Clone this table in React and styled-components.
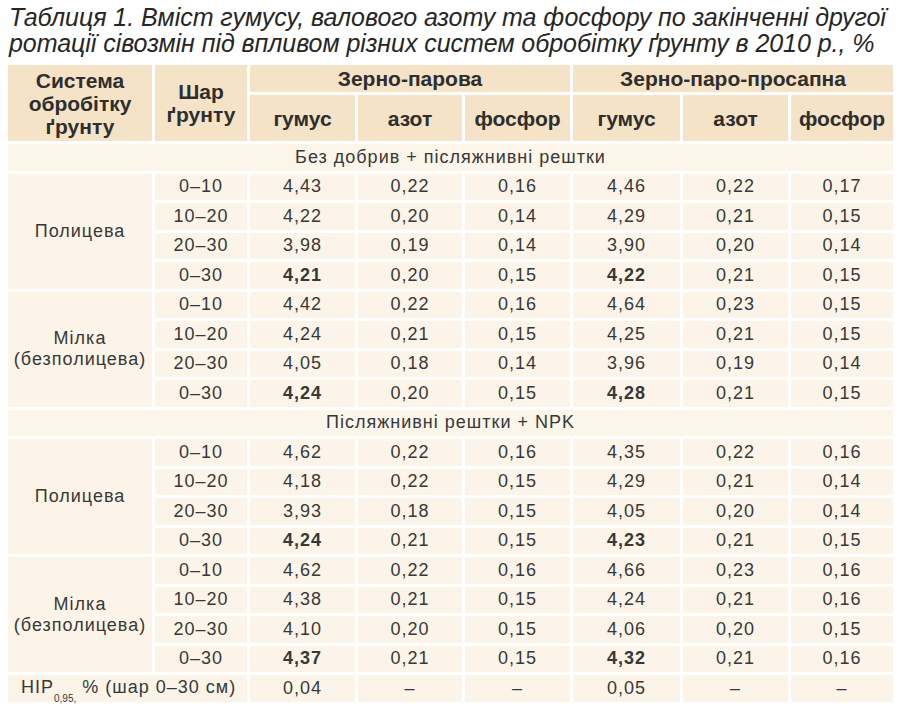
import React from 'react'
import styled, { createGlobalStyle } from 'styled-components'

const GlobalStyle = createGlobalStyle`
  body {
    margin: 0;
    background: #ffffff;
    font-family: "Liberation Sans", Arial, sans-serif;
  }
`

const sections = [
  {
    title: 'Без добрив + післяжнивні рештки',
    groups: [
      {
        name: ['Полицева'],
        rows: [
          ['0–10', '4,43', '0,22', '0,16', '4,46', '0,22', '0,17'],
          ['10–20', '4,22', '0,20', '0,14', '4,29', '0,21', '0,15'],
          ['20–30', '3,98', '0,19', '0,14', '3,90', '0,20', '0,14'],
          ['0–30', '4,21', '0,20', '0,15', '4,22', '0,21', '0,15'],
        ],
      },
      {
        name: ['Мілка', '(безполицева)'],
        rows: [
          ['0–10', '4,42', '0,22', '0,16', '4,64', '0,23', '0,15'],
          ['10–20', '4,24', '0,21', '0,15', '4,25', '0,21', '0,15'],
          ['20–30', '4,05', '0,18', '0,14', '3,96', '0,19', '0,14'],
          ['0–30', '4,24', '0,20', '0,15', '4,28', '0,21', '0,15'],
        ],
      },
    ],
  },
  {
    title: 'Післяжнивні рештки + NPK',
    groups: [
      {
        name: ['Полицева'],
        rows: [
          ['0–10', '4,62', '0,22', '0,16', '4,35', '0,22', '0,16'],
          ['10–20', '4,18', '0,22', '0,15', '4,29', '0,21', '0,14'],
          ['20–30', '3,93', '0,18', '0,15', '4,05', '0,20', '0,14'],
          ['0–30', '4,24', '0,21', '0,15', '4,23', '0,21', '0,15'],
        ],
      },
      {
        name: ['Мілка', '(безполицева)'],
        rows: [
          ['0–10', '4,62', '0,22', '0,16', '4,66', '0,23', '0,16'],
          ['10–20', '4,38', '0,21', '0,15', '4,24', '0,21', '0,16'],
          ['20–30', '4,10', '0,20', '0,15', '4,06', '0,20', '0,15'],
          ['0–30', '4,37', '0,21', '0,15', '4,32', '0,21', '0,16'],
        ],
      },
    ],
  },
]

const widths = [147, 95, 108, 107, 108, 110, 108, 105]

const App = () => {
  return (
    <Page>
      <GlobalStyle />
      <Title>
        Таблиця 1. Вміст гумусу, валового азоту та фосфору по закінченні другої ротації сівозмін під впливом різних систем обробітку ґрунту в 2010 р., %
      </Title>
      <Table>
        <colgroup>
          {widths.map((w, i) => (
            <col key={i} style={{ width: w }} />
          ))}
        </colgroup>
        <thead>
          <tr>
            <HeadCell rowSpan={2}>
              Система<br />обробітку<br />ґрунту
            </HeadCell>
            <HeadCell rowSpan={2}>
              Шар<br />ґрунту
            </HeadCell>
            <HeadCell colSpan={3} $top>Зерно-парова</HeadCell>
            <HeadCell colSpan={3} $top>Зерно-паро-просапна</HeadCell>
          </tr>
          <tr>
            <HeadCell>гумус</HeadCell>
            <HeadCell>азот</HeadCell>
            <HeadCell>фосфор</HeadCell>
            <HeadCell>гумус</HeadCell>
            <HeadCell>азот</HeadCell>
            <HeadCell>фосфор</HeadCell>
          </tr>
        </thead>
        <tbody>
          {sections.map((section) => (
            <React.Fragment key={section.title}>
              <Row>
                <SectionCell colSpan={8}>{section.title}</SectionCell>
              </Row>
              {section.groups.map((group, gi) =>
                group.rows.map((row, ri) => (
                  <Row key={gi + '-' + ri}>
                    {ri === 0 && (
                      <Cell rowSpan={4}>
                        {group.name.map((line, li) => (
                          <div key={li}>{line}</div>
                        ))}
                      </Cell>
                    )}
                    {row.map((value, ci) => (
                      <Cell key={ci} $bold={ri === 3 && (ci === 1 || ci === 4)}>
                        {value}
                      </Cell>
                    ))}
                  </Row>
                ))
              )}
            </React.Fragment>
          ))}
          <Row>
            <Cell colSpan={2} $left>
              НІР<Sub>0,95,</Sub> % (шар 0–30 см)
            </Cell>
            <Cell>0,04</Cell>
            <Cell>–</Cell>
            <Cell>–</Cell>
            <Cell>0,05</Cell>
            <Cell>–</Cell>
            <Cell>–</Cell>
          </Row>
        </tbody>
      </Table>
    </Page>
  )
}

export default App

const Page = styled.div`
  width: 900px;
  padding: 4px 0 0 0;
`

const Title = styled.div`
  padding: 0 4px 0 9px;
  font-family: "Liberation Sans", Arial, sans-serif;
  font-style: italic;
  font-size: 25px;
  line-height: 26px;
  letter-spacing: -0.05px;
  color: #262626;
  height: 58px;
`

const Table = styled.table`
  margin-left: 5px;
  width: 888px;
  table-layout: fixed;
  border-collapse: collapse;
  color: #383838;
`

const HeadCell = styled.th`
  background: #f5e3c8;
  border: 3px solid #ffffff;
  font-size: 21px;
  font-weight: 700;
  line-height: 23px;
  color: #2e2e2e;
  padding: 0;
  height: ${(p) => (p.$top ? '27px' : '46px')};
  text-align: center;
  vertical-align: middle;
`

const Row = styled.tr`
  height: 29.5px;
`

const Cell = styled.td`
  background: #fcf4e8;
  border: 3px solid #ffffff;
  font-size: 18px;
  letter-spacing: 1px;
  line-height: 21px;
  font-weight: ${(p) => (p.$bold ? 700 : 400)};
  padding: ${(p) => (p.$left ? '0 0 0 13px' : '0')};
  text-align: ${(p) => (p.$left ? 'left' : 'center')};
  vertical-align: middle;
  white-space: nowrap;
`

const SectionCell = styled(Cell)`
  background: #fcf5ea;
`

const Sub = styled.sub`
  font-size: 10px;
  letter-spacing: 0;
  vertical-align: -9px;
  line-height: 0;
`
